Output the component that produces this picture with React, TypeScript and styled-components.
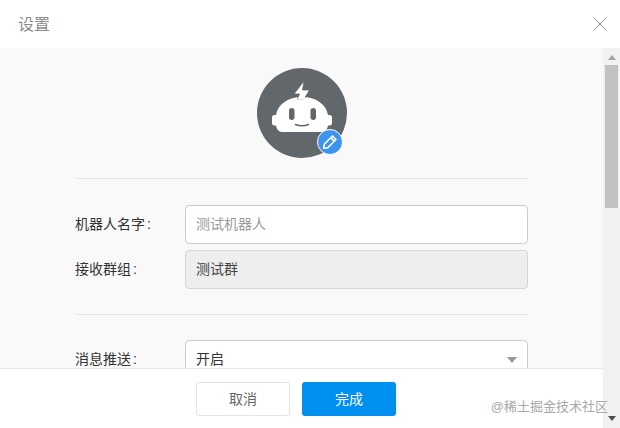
import React from "react";
import styled, { createGlobalStyle } from "styled-components";

const GlobalStyle = createGlobalStyle`
  html, body {
    margin: 0;
    padding: 0;
    background: #fff;
  }
  body {
    font-family: "Liberation Sans", "Noto Sans CJK SC", sans-serif;
  }
`;

const RobotAvatar = () => (
  <svg width="90" height="90" viewBox="0 0 90 90">
    <circle cx="45" cy="45" r="45" fill="#62676c" />
    <path
      d="M25 64 Q20 64 19 57.500 H17.500 Q15 57.500 15 55 V49.500 Q15 47 17.500 47 H19 C21 36 31 29 45 29 C59 29 69 36 71 47 H72.500 Q75 47 75 49.500 V55 Q75 57.500 72.500 57.500 H71 Q70 64 65 64 Z"
      fill="#fff"
    />
    <path
      d="M47 13 L37 26 H42.500 L40.500 31 H47 L52.500 22 H45.500 Z"
      fill="#fff"
      stroke="#62676c"
      strokeWidth="0.800"
    />
    <path d="M40.900 31.500 H47.500 L48 29 H41.500 Z" fill="#fff" />
    <rect x="32" y="40" width="5.500" height="12" rx="2.750" fill="#62676c" />
    <rect x="53.500" y="40" width="5.500" height="12" rx="2.750" fill="#62676c" />
    <path d="M38.500 56.500 Q45 59 51.500 56.500" fill="none" stroke="#62676c" strokeWidth="1.600" strokeLinecap="round" />
  </svg>
);

const PencilIcon = () => (
  <svg width="16" height="16" viewBox="0 0 14 14">
    <path
      d="M9.200 1.800 L12.200 4.800 L5 12 L1.500 12.500 L2 9 Z M7.800 3.400 L10.600 6.200"
      fill="none"
      stroke="#fff"
      strokeWidth="1.400"
      strokeLinejoin="round"
    />
  </svg>
);

const App = () => (
  <>
    <GlobalStyle />
    <Dialog>
      <Header>
        <Title>设置</Title>
        <CloseButton aria-label="关闭">
          <svg width="14" height="14" viewBox="0 0 14 14">
            <path d="M1 1 L13 13 M13 1 L1 13" stroke="#8e8e8e" strokeWidth="1" fill="none" />
          </svg>
        </CloseButton>
      </Header>
      <Main>
        <Column>
          <Body>
            <AvatarWrap>
              <RobotAvatar />
              <EditBadge>
                <PencilIcon />
              </EditBadge>
            </AvatarWrap>
            <Divider />
            <Rows>
              <FormRow>
                <Label>
                  机器人名字<Colon>:</Colon>
                </Label>
                <TextInput placeholder="测试机器人" readOnly />
              </FormRow>
              <FormRow>
                <Label>
                  接收群组<Colon>:</Colon>
                </Label>
                <ReadonlyField>测试群</ReadonlyField>
              </FormRow>
            </Rows>
            <LowerDivider />
            <FormRow>
              <Label>
                消息推送<Colon>:</Colon>
              </Label>
              <SelectField>
                开启
                <Caret />
              </SelectField>
            </FormRow>
          </Body>
          <Footer>
            <CancelButton>取消</CancelButton>
            <DoneButton>完成</DoneButton>
          </Footer>
        </Column>
        <Scrollbar>
          <ArrowUp />
          <Thumb />
          <ArrowDown />
        </Scrollbar>
      </Main>
    </Dialog>
    <Watermark>@稀土掘金技术社区</Watermark>
  </>
);

export default App;

const Dialog = styled.div`
  width: 620px;
  height: 428px;
  display: flex;
  flex-direction: column;
  overflow: hidden;
  background: #fff;
`;

const Header = styled.div`
  height: 48px;
  flex: none;
  display: flex;
  align-items: center;
  justify-content: space-between;
  padding: 0 13px 0 18px;
`;

const Title = styled.div`
  font-size: 16px;
  color: #8c8c8c;
  padding-bottom: 2px;
`;

const CloseButton = styled.div`
  display: flex;
`;

const Main = styled.div`
  flex: 1;
  min-height: 0;
  display: flex;
`;

const Column = styled.div`
  width: 603px;
  display: flex;
  flex-direction: column;
`;

const Body = styled.div`
  flex: 1;
  min-height: 0;
  overflow: hidden;
  background: #f9f9f9;
  padding: 20px 75px 0;
`;

const AvatarWrap = styled.div`
  position: relative;
  width: 90px;
  height: 90px;
  margin: 0 auto;
  left: 0.5px;
`;

const EditBadge = styled.div`
  position: absolute;
  right: 4px;
  bottom: 3px;
  box-sizing: border-box;
  width: 26px;
  height: 26px;
  border-radius: 50%;
  background: #3d94f0;
  border: 1.5px solid #fff;
  display: flex;
  align-items: center;
  justify-content: center;
`;

const Divider = styled.div`
  height: 1px;
  background: #e6e6e6;
  margin: 20px 0 26px;
`;

const LowerDivider = styled(Divider)`
  margin: 25px 0 25px;
`;

const Rows = styled.div`
  display: flex;
  flex-direction: column;
  gap: 6px;
`;

const FormRow = styled.div`
  display: flex;
  align-items: center;
`;

const Label = styled.div`
  width: 110px;
  flex: none;
  font-size: 14px;
  color: #333;
  padding-bottom: 3px;
`;

const Colon = styled.span`
  margin-left: 2px;
`;

const TextInput = styled.input`
  flex: 1;
  min-width: 0;
  box-sizing: border-box;
  height: 39px;
  padding: 0 10px 2px;
  border: 1px solid #ccc;
  border-radius: 4px;
  background: #fff;
  font: inherit;
  font-size: 14px;
  outline: none;

  &::placeholder {
    color: #9a9a9a;
    opacity: 1;
  }
`;

const ReadonlyField = styled.div`
  flex: 1;
  box-sizing: border-box;
  height: 39px;
  padding: 0 10px 3px;
  border: 1px solid #d4d4d4;
  border-radius: 4px;
  background: #eeeeee;
  font-size: 14px;
  color: #444;
  display: flex;
  align-items: center;
`;

const SelectField = styled(ReadonlyField)`
  position: relative;
  background: #fff;
  border-color: #ccc;
  color: #333;
`;

const Caret = styled.span`
  position: absolute;
  right: 10px;
  top: 16px;
  width: 0;
  height: 0;
  border-left: 5px solid transparent;
  border-right: 5px solid transparent;
  border-top: 6px solid #999;
`;

const Footer = styled.div`
  height: 60px;
  flex: none;
  box-sizing: border-box;
  background: #fff;
  border-top: 1px solid #e6e6e6;
  display: flex;
  align-items: center;
  gap: 12px;
  padding-left: 196px;
`;

const CancelButton = styled.div`
  box-sizing: border-box;
  width: 94px;
  height: 34px;
  padding-bottom: 2px;
  border: 1px solid #e4e4e4;
  border-radius: 3px;
  background: #fff;
  color: #666;
  font-size: 14px;
  display: flex;
  align-items: center;
  justify-content: center;
`;

const DoneButton = styled(CancelButton)`
  border: none;
  background: #0090f0;
  color: #fff;
`;

const Scrollbar = styled.div`
  width: 17px;
  background: #f1f1f1;
  display: flex;
  flex-direction: column;
  align-items: center;
  position: relative;
`;

const ArrowUp = styled.div`
  flex: none;
  width: 0;
  height: 0;
  margin: 7px 0 5px;
  border-left: 4px solid transparent;
  border-right: 4px solid transparent;
  border-bottom: 5px solid #a3a3a3;
`;

const Thumb = styled.div`
  flex: none;
  width: 13px;
  height: 143px;
  background: #c1c1c1;
`;

const ArrowDown = styled.div`
  margin-top: auto;
  margin-bottom: 7px;
  width: 0;
  height: 0;
  border-left: 4px solid transparent;
  border-right: 4px solid transparent;
  border-top: 5px solid #505050;
`;

const Watermark = styled.div`
  position: absolute;
  right: 12px;
  top: 398px;
  font-size: 13px;
  line-height: 18px;
  color: #a8a8a8;
`;
